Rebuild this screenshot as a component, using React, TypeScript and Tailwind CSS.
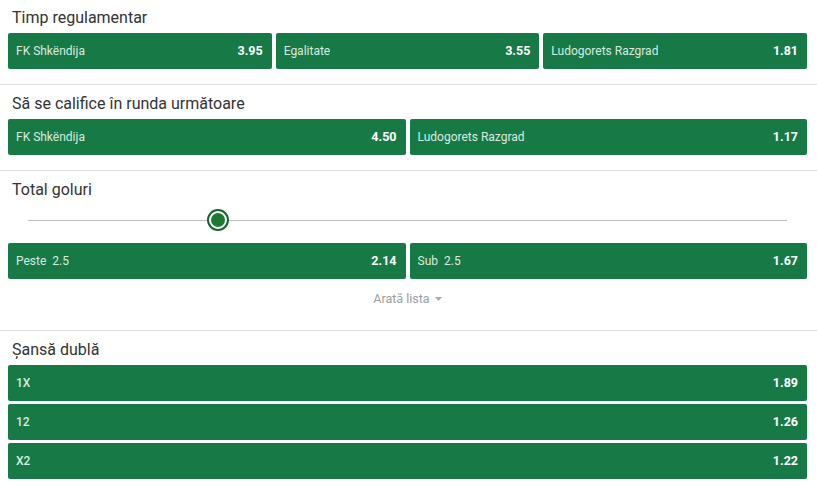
import React from 'react';

type Odd = { label: string; value: string; line?: string };

const font = { fontFamily: 'Roboto, "Noto Sans", sans-serif' };

function OddButton({ odd, strong }: { odd: Odd; strong?: boolean }) {
  return (
    <button
      className={`flex h-9 min-w-0 items-center justify-between rounded-[2px] bg-[#177a46] pl-2 pr-[9px] text-left ${
        strong ? 'w-full shrink-0' : 'flex-1'
      }`}
    >
      <span className={`truncate text-[12px] text-[#d9ebe0] ${strong ? 'font-medium' : ''}`}>
        {odd.label}
        {odd.line && <span className="ml-[6px]">{odd.line}</span>}
      </span>
      <span className="text-[12.5px] font-bold text-white">{odd.value}</span>
    </button>
  );
}

function Section({ title, first, children }: { title: string; first?: boolean; children: React.ReactNode }) {
  return (
    <section className={`border-b border-[#dedede] pr-[10px] pl-2 ${first ? 'pt-2' : 'pt-[9px]'}`}>
      <h2 className="mb-[5px] pl-[4px] text-[16px] leading-5 text-[#333]">{title}</h2>
      {children}
    </section>
  );
}

export default function App() {
  const regular: Odd[] = [
    { label: 'FK Shkëndija', value: '3.95' },
    { label: 'Egalitate', value: '3.55' },
    { label: 'Ludogorets Razgrad', value: '1.81' },
  ];
  const qualify: Odd[] = [
    { label: 'FK Shkëndija', value: '4.50' },
    { label: 'Ludogorets Razgrad', value: '1.17' },
  ];
  const goals: Odd[] = [
    { label: 'Peste', line: '2.5', value: '2.14' },
    { label: 'Sub', line: '2.5', value: '1.67' },
  ];
  const double: Odd[] = [
    { label: '1X', value: '1.89' },
    { label: '12', value: '1.26' },
    { label: 'X2', value: '1.22' },
  ];

  return (
    <div className="w-[817px] bg-white" style={font}>
      <Section title="Timp regulamentar" first>
        <div className="flex gap-1 pb-[15px]">
          {regular.map((o) => (
            <OddButton key={o.label} odd={o} />
          ))}
        </div>
      </Section>

      <Section title="Să se califice în runda următoare">
        <div className="flex gap-1 pb-[15px]">
          {qualify.map((o) => (
            <OddButton key={o.label} odd={o} />
          ))}
        </div>
      </Section>

      <Section title="Total goluri">
        {/* slider */}
        <div className="relative h-[38px]">
          <div className="absolute top-[15px] right-[20px] left-[20px] h-px bg-[#bdbdbd]" />
          <div className="absolute top-[4px] left-[199px] flex h-[22px] w-[22px] items-center justify-center rounded-full border-2 border-[#17632f] bg-white">
            <div className="h-[14px] w-[14px] rounded-full bg-[#1d7a2e]" />
          </div>
        </div>
        <div className="flex gap-1">
          {goals.map((o) => (
            <OddButton key={o.label} odd={o} />
          ))}
        </div>
        <div className="flex h-10 items-center justify-center text-[12.5px] text-[#9e9e9e]">
          <span>Arată lista</span>
          <svg className="ml-[5px]" width="7" height="4" viewBox="0 0 7 4">
            <path d="M0 0h7L3.5 4z" fill="#a8a8a8" />
          </svg>
        </div>
        <div className="h-[11px]" />
      </Section>

      <section className="pr-[10px] pl-2 pt-[9px] pb-2">
        <h2 className="mb-[5px] pl-[4px] text-[16px] leading-5 text-[#333]">Șansă dublă</h2>
        <div className="flex flex-col gap-[3px]">
          {double.map((o) => (
            <OddButton key={o.label} odd={o} strong />
          ))}
        </div>
      </section>
    </div>
  );
}
